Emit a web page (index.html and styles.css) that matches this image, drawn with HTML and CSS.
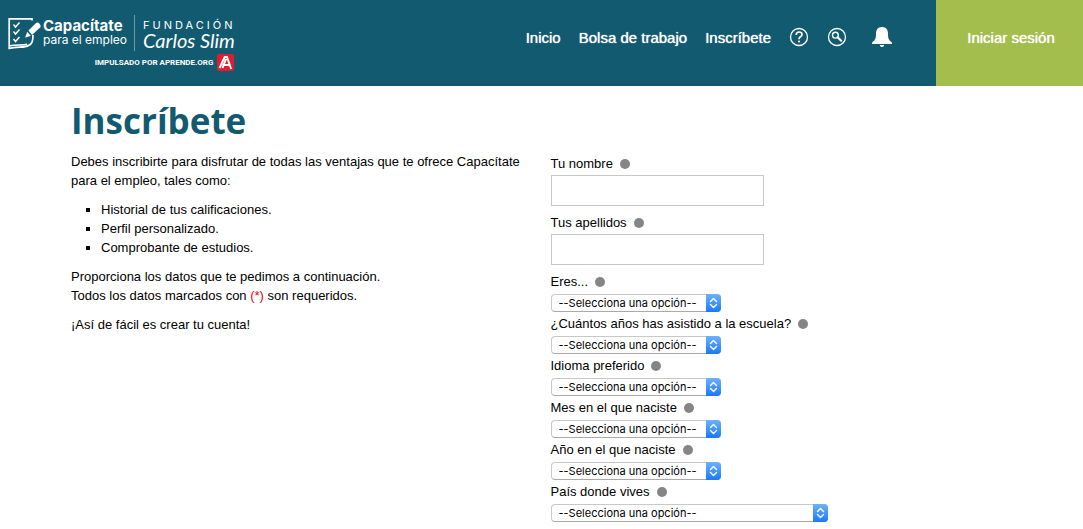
FILE: index.html
```html
<!DOCTYPE html>
<html lang="es">
<head>
<meta charset="utf-8">
<meta name="viewport" content="width=device-width, initial-scale=1">
<title>Inscríbete - Capacítate para el empleo</title>
<link rel="stylesheet" href="styles.css">
</head>
<body>
<svg class="defs" width="0" height="0" aria-hidden="true">
  <symbol id="updown" viewBox="0 0 15 18"><path d="M4.5 7.5l3-3 3 3M4.5 10.5l3 3 3-3" fill="none" stroke="#fff" stroke-width="1.4" stroke-linecap="round" stroke-linejoin="round"/></symbol>
</svg>
<header class="header">
  <a class="brand" href="#">
    <span class="brand-row">
      <svg class="brand-icon" viewBox="0 0 34 34" aria-hidden="true">
        <path d="M24 4.500V2.800H1.200V32.300C10 30.500 17 32 20.500 29.500C24 28 25 25.500 25 19M1 30C8 28 15 30 19 28" fill="none" stroke="#fff" stroke-width="1.700"/>
        <path d="M5.500 8.500l2 2.500 4-4.500M5.500 15.500l2 2.500 4-4.500M5.500 23l2 2.500 4-4.500" fill="none" stroke="#fff" stroke-width="1.500"/>
        <path d="M20.500 14.500l7.500-7.500q1.500-1.200 3.500.8t.8 3.500L24 19z" fill="#fff"/>
        <path d="M19.300 15.700l3.500 4-5.800 2z" fill="#fff"/>
      </svg>
      <span class="brand-name"><b>Capacítate</b><span>para el empleo</span></span>
      <span class="brand-partner"><span class="foundation">FUNDACIÓN</span><i class="signature">Carlos Slim</i></span>
    </span>
    <span class="brand-sponsor">
      <span>IMPULSADO POR APRENDE.ORG</span>
      <svg class="sponsor-icon" viewBox="0 0 17 17" aria-hidden="true">
        <rect width="17" height="17" rx="2" fill="#e31b2f"/>
        <path d="M2.500 14L7.700 3h2.200l4.300 12M5.500 14L9 5M5.500 11h7.500" fill="none" stroke="#fff" stroke-width="2"/>
      </svg>
    </span>
  </a>
  <nav class="nav">
    <a href="#">Inicio</a>
    <a href="#">Bolsa de trabajo</a>
    <a href="#">Inscríbete</a>
    <a class="icon-link" href="#" aria-label="Ayuda"><svg viewBox="0 0 20 20"><circle cx="10" cy="10" r="8.500" fill="none" stroke="#fff" stroke-width="1.300"/><path d="M7.200 8q0-3 2.900-3t2.900 2.600q0 1.300-1.500 2.200t-1.500 2.400" fill="none" stroke="#fff" stroke-width="1.700"/><circle cx="10" cy="14.500" r="1.100" fill="#fff"/></svg></a>
    <a class="icon-link" href="#" aria-label="Buscar"><svg viewBox="0 0 20 20"><circle cx="10" cy="10" r="8.500" fill="none" stroke="#fff" stroke-width="1.300"/><circle cx="8.400" cy="8.200" r="2.900" fill="none" stroke="#fff" stroke-width="1.400"/><path d="M10.600 10.300l3.600 3.400" stroke="#fff" stroke-width="2.200" stroke-linecap="round"/></svg></a>
    <a class="icon-link bell" href="#" aria-label="Notificaciones"><svg viewBox="0 0 20 20"><path d="M10 0C5.200 0 4 3.500 4 6.500c0 5-.6 6.500-4 9V17h20v-1.500c-3.400-2.500-4-4-4-9C16 3.500 14.800 0 10 0zM7.800 18h4.400q-.3 2-2.200 2t-2.200-2z" fill="#fff"/></svg></a>
  </nav>
  <a class="login" href="#">Iniciar sesión</a>
</header>
<main class="page">
  <h1>Inscríbete</h1>
  <div class="columns">
    <section class="intro">
      <p>Debes inscribirte para disfrutar de todas las ventajas que te ofrece Capacítate para el empleo, tales como:</p>
      <ul>
        <li>Historial de tus calificaciones.</li>
        <li>Perfil personalizado.</li>
        <li>Comprobante de estudios.</li>
      </ul>
      <p>Proporciona los datos que te pedimos a continuación.<br>Todos los datos marcados con <span class="required">(*)</span> son requeridos.</p>
      <p>¡Así de fácil es crear tu cuenta!</p>
    </section>
    <form class="form">
      <div class="field field-text"><label for="nombre">Tu nombre</label><input id="nombre" type="text"></div>
      <div class="field field-text"><label for="apellidos">Tus apellidos</label><input id="apellidos" type="text"></div>
      <div class="field"><label for="eres">Eres...</label><div class="select"><select id="eres"><option>--Selecciona una opción--</option></select><svg class="arrows"><use href="#updown"/></svg></div></div>
      <div class="field"><label for="escuela">¿Cuántos años has asistido a la escuela?</label><div class="select"><select id="escuela"><option>--Selecciona una opción--</option></select><svg class="arrows"><use href="#updown"/></svg></div></div>
      <div class="field"><label for="idioma">Idioma preferido</label><div class="select"><select id="idioma"><option>--Selecciona una opción--</option></select><svg class="arrows"><use href="#updown"/></svg></div></div>
      <div class="field"><label for="mes">Mes en el que naciste</label><div class="select"><select id="mes"><option>--Selecciona una opción--</option></select><svg class="arrows"><use href="#updown"/></svg></div></div>
      <div class="field"><label for="anio">Año en el que naciste</label><div class="select"><select id="anio"><option>--Selecciona una opción--</option></select><svg class="arrows"><use href="#updown"/></svg></div></div>
      <div class="field"><label for="pais">País donde vives</label><div class="select wide"><select id="pais"><option>--Selecciona una opción--</option></select><svg class="arrows"><use href="#updown"/></svg></div></div>
      <div class="field"><label for="estado">Estado/Departamento/Provincia</label><div class="select"><select id="estado"><option>--Selecciona una opción--</option></select><svg class="arrows"><use href="#updown"/></svg></div></div>
    </form>
  </div>
</main>
</body>
</html>
```
FILE: styles.css
```css
* { box-sizing: border-box; }
html { scrollbar-width: none; }
body {
  margin: 0;
  background: #fff;
  color: #000;
  font: 13px/19px "Liberation Sans", Arial, sans-serif;
}
a { color: inherit; text-decoration: none; }
.defs { position: absolute; }

.header {
  display: flex;
  align-items: stretch;
  min-height: 86px;
  background: #125a70;
  color: #fff;
}
.brand {
  display: flex;
  flex-direction: column;
  gap: 3px;
  padding: 15px 0 0 8px;
}
.brand-row { display: flex; align-items: center; }
.brand-icon { width: 34px; height: 34px; }
.brand-name {
  display: flex;
  flex-direction: column;
  width: 92px;
  padding-left: 1px;
  font: 12px/14px Inter, sans-serif;
  white-space: nowrap;
}
.brand-name b { font-size: 15px; }
.brand-partner {
  display: flex;
  flex-direction: column;
  justify-content: center;
  height: 36px;
  padding-left: 8px;
  border-left: 1px solid #6f9cab;
  white-space: nowrap;
}
.foundation { font: 11px/14px Inter, sans-serif; letter-spacing: 3px; }
.signature { font: italic 20px/16px Lato, sans-serif; }
.brand-sponsor {
  display: flex;
  align-items: center;
  justify-content: flex-end;
  gap: 4px;
  padding-right: 1px;
  font: bold 8px/17px Roboto, sans-serif;
}
.sponsor-icon { width: 17px; height: 17px; }

.nav {
  display: flex;
  align-items: center;
  gap: 18px;
  margin-left: auto;
  padding: 0 44px 12px 0;
  font-size: 15px;
  white-space: nowrap;
}
.nav > a, .login { text-shadow: 0 0 1px #fff; }
.icon-link svg { display: block; width: 20px; height: 20px; }
.bell { margin-left: 7px; }
.login {
  display: flex;
  align-items: center;
  justify-content: center;
  width: 147px;
  padding: 0 0 12px 3px;
  background: #a4be4e;
  font-size: 15px;
}

.page { padding: 12px 71px 20px; }
h1 {
  margin: 0;
  color: #125a70;
  font: bold 35px/46px "Open Sans", sans-serif;
}
.columns {
  display: grid;
  grid-template-columns: 1fr 1fr;
  gap: 18px;
  padding-top: 8px;
}
.intro p { margin: 0 0 10px; }
.intro ul {
  margin: 0 0 10px;
  padding-left: 30px;
  list-style: square;
}
.required { color: #e2001a; }

.field-text { padding-bottom: 5px; }
.field label {
  display: flex;
  align-items: center;
  gap: 7px;
  height: 23px;
}
.field label::after {
  content: "";
  width: 10px;
  height: 10px;
  border-radius: 50%;
  background: #858585;
}
.field input {
  display: block;
  width: 213px;
  height: 31px;
  padding: 4px 8px;
  border: 1px solid #c8c8c8;
  background: #fff;
  font: inherit;
}
.select { position: relative; width: 170px; margin-top: 1px; }
.select.wide { width: 277px; }
.select select {
  display: block;
  width: 100%;
  height: 18px;
  padding: 0 20px 0 7px;
  border: 1px solid #c8c8c8;
  border-bottom-color: #aaa;
  border-radius: 4px;
  appearance: none;
  background: #fff;
  color: #000;
  font: 11px/16px Inter, sans-serif;
}
.arrows {
  position: absolute;
  top: 0;
  right: 0;
  width: 15px;
  height: 18px;
  border-radius: 0 4px 4px 0;
  background: linear-gradient(#6cb3fa, #1a78fb);
  pointer-events: none;
}
```
